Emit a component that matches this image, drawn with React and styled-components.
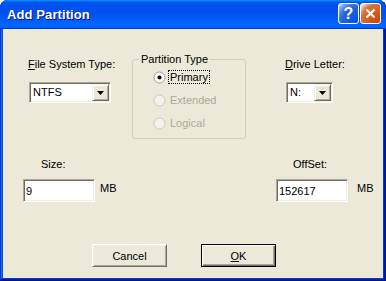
import React from 'react'
import styled, { createGlobalStyle } from 'styled-components'

const GlobalStyle = createGlobalStyle`
  body {
    margin: 0;
    background: #ffffff;
  }
`

const Window = styled.div`
  width: 386px;
  height: 281px;
  box-sizing: border-box;
  display: flex;
  flex-direction: column;
  border-radius: 8px 8px 0 0;
  overflow: hidden;
  background: #0055e5;
  box-shadow: inset -1px -1px #00138c, inset 1px 1px #0831d9,
    inset -2px -2px #001ea0, inset 2px 2px #166aee, inset -3px -3px #003bda,
    inset 3px 3px #0855dd;
`

const TitleBar = styled.div`
  height: 29px;
  flex: none;
  display: flex;
  align-items: center;
  padding: 0 5px 0 7px;
  border-radius: 8px 8px 0 0;
  background: linear-gradient(
    180deg,
    #0997ff,
    #0053ee 8%,
    #0050ee 40%,
    #06f 88%,
    #06f 93%,
    #005bff 95%,
    #003dd7 96%,
    #003dd7
  );
`

const Title = styled.div`
  flex: 1;
  color: #fff;
  font-family: 'Liberation Sans', Arial, sans-serif;
  font-weight: 700;
  font-size: 13px;
  letter-spacing: 0.1px;
  padding-bottom: 1px;
  text-shadow: 1px 1px #0f1089;
`

const CaptionButtons = styled.div`
  display: flex;
  gap: 1px;
  padding-bottom: 2px;
`

const CaptionButton = styled.div`
  width: 21px;
  height: 21px;
  box-sizing: border-box;
  border: 1px solid #fff;
  border-radius: 3px;
  display: flex;
  align-items: center;
  justify-content: center;
  color: #fff;
  font-family: 'Liberation Sans', Arial, sans-serif;
  font-weight: 700;
  font-size: 16px;
  background: ${(p) =>
    p.$close
      ? 'radial-gradient(circle at 90% 90%, #cc4600 0%, #dc6527 55%, #cd7546 70%, #ffccb2 90%, #fff 100%)'
      : 'radial-gradient(circle at 90% 90%, #0054e9 0%, #2263d5 55%, #4479e4 70%, #a3bbec 90%, #fff 100%)'};
`

const Client = styled.div`
  flex: 1;
  margin: 0 3px 3px;
  background: #ece9d8;
  font-family: 'Liberation Sans', Tahoma, sans-serif;
  font-size: 11px;
  color: #000;
  display: flex;
  flex-direction: column;
`

const TopRow = styled.div`
  display: grid;
  grid-template-columns: 104px 153px 1fr;
  align-items: start;
  padding: 24px 0 0 25px;
`

const Field = styled.div`
  display: flex;
  flex-direction: column;
  align-items: flex-start;
  padding-top: 5px;
`

const Label = styled.div`
  line-height: 13px;
  height: 13px;
  margin-left: ${(p) => p.$indent || 0}px;
  margin-bottom: ${(p) => p.$below || 0}px;
  white-space: nowrap;
`

const Combo = styled.div`
  width: ${(p) => p.$width}px;
  height: 21px;
  margin-left: 1px;
  box-sizing: border-box;
  display: flex;
  align-items: center;
  background: #fff;
  border: 1px solid;
  border-color: #aca899 #fff #fff #aca899;
  box-shadow: inset 1px 1px #716f64, inset -1px -1px #f1efe2;
  padding: 1px;
`

const ComboText = styled.div`
  flex: 1;
  padding-left: 2px;
  line-height: 13px;
`

const ArrowButton = styled.div`
  width: 17px;
  height: 17px;
  box-sizing: border-box;
  background: #ece9d8;
  border: 1px solid;
  border-color: #f1efe2 #716f64 #716f64 #f1efe2;
  box-shadow: inset 1px 1px #fff, inset -1px -1px #aca899;
  display: flex;
  align-items: center;
  justify-content: center;
`

const Group = styled.fieldset`
  margin: 0;
  padding: 0 0 0 20px;
  min-width: 0;
  width: 114px;
  height: 86px;
  box-sizing: border-box;
  border: 1px solid #d0d0bf;
  border-radius: 3px;
  display: flex;
  flex-direction: column;
  gap: 1px;
`

const Legend = styled.legend`
  margin-left: -14px;
  padding: 0 2px;
  line-height: 13px;
`

const RadioRow = styled.div`
  height: 22px;
  display: flex;
  align-items: center;
  color: ${(p) => (p.$disabled ? '#aca899' : '#000')};
`

const RadioText = styled.span`
  margin-left: 2px;
  padding: 0 1px;
  line-height: 12px;
  border: 1px dotted ${(p) => (p.$focus ? '#000' : 'transparent')};
`

const MidRow = styled.div`
  display: grid;
  grid-template-columns: 253px 1fr;
  padding: 19px 0 0 20px;
`

const SizeField = styled.div`
  display: flex;
  flex-direction: column;
  align-items: flex-start;
`

const InputLine = styled.div`
  display: flex;
  align-items: flex-start;
`

const TextBox = styled.input`
  width: 72px;
  height: 23px;
  box-sizing: border-box;
  margin: 0;
  padding: 0 0 0 2px;
  font-family: inherit;
  font-size: 11px;
  color: #000;
  background: #fff;
  outline: none;
  border: 1px solid;
  border-color: #aca899 #fff #fff #aca899;
  box-shadow: inset 1px 1px #716f64, inset -1px -1px #f1efe2;
`

const Unit = styled.span`
  margin: 3px 0 0 ${(p) => p.$gap}px;
  line-height: 13px;
`

const ButtonRow = styled.div`
  display: flex;
  gap: 34px;
  padding: 42px 0 0 89px;
`

const PushButton = styled.div`
  width: 75px;
  height: 23px;
  box-sizing: border-box;
  display: flex;
  align-items: center;
  justify-content: center;
  background: #ece9d8;
  border: 1px solid;
  border-color: ${(p) =>
    p.$default ? '#000' : '#fff #716f64 #716f64 #fff'};
  box-shadow: ${(p) =>
    p.$default
      ? 'inset 1px 1px #fff, inset -1px -1px #716f64, inset -2px -2px #aca899'
      : 'inset 1px 1px #f1efe2, inset -1px -1px #aca899'};
`

const Arrow = () => (
  <svg width="7" height="4" viewBox="0 0 7 4">
    <path d="M0 0h7L3.5 4z" fill="#000" />
  </svg>
)

const Radio = ({ checked, disabled }) => (
  <svg width="13" height="13" viewBox="0 0 13 13">
    <circle
      cx="6.5"
      cy="6.5"
      r="5.5"
      fill={disabled ? '#f4f3ee' : '#fff'}
      stroke={disabled ? '#cac8bb' : '#9b9a92'}
    />
    {checked && <circle cx="6.5" cy="6.5" r="2" fill="#000" />}
  </svg>
)

const CloseGlyph = () => (
  <svg width="11" height="11" viewBox="0 0 11 11">
    <path d="M1.5 1.5l8 8M9.5 1.5l-8 8" stroke="#fff" strokeWidth="2.2" />
  </svg>
)

const App = () => {
  return (
    <>
      <GlobalStyle />
      <Window>
        <TitleBar>
          <Title>Add Partition</Title>
          <CaptionButtons>
            <CaptionButton>?</CaptionButton>
            <CaptionButton $close>
              <CloseGlyph />
            </CaptionButton>
          </CaptionButtons>
        </TitleBar>
        <Client>
          <TopRow>
            <Field>
              <Label $below={11}>
                <u>F</u>ile System Type:
              </Label>
              <Combo $width={82}>
                <ComboText>NTFS</ComboText>
                <ArrowButton>
                  <Arrow />
                </ArrowButton>
              </Combo>
            </Field>
            <Group>
              <Legend>Partition Type</Legend>
              <RadioRow>
                <Radio checked />
                <RadioText $focus>Primary</RadioText>
              </RadioRow>
              <RadioRow $disabled>
                <Radio disabled />
                <RadioText>Extended</RadioText>
              </RadioRow>
              <RadioRow $disabled>
                <Radio disabled />
                <RadioText>Logical</RadioText>
              </RadioRow>
            </Group>
            <Field>
              <Label $below={11}>
                <u>D</u>rive Letter:
              </Label>
              <Combo $width={47}>
                <ComboText>N:</ComboText>
                <ArrowButton>
                  <Arrow />
                </ArrowButton>
              </Combo>
            </Field>
          </TopRow>
          <MidRow>
            <SizeField>
              <Label $indent={18} $below={8}>
                Size:
              </Label>
              <InputLine>
                <TextBox value="9" readOnly />
                <Unit $gap={5}>MB</Unit>
              </InputLine>
            </SizeField>
            <SizeField>
              <Label $indent={17} $below={8}>
                OffSet:
              </Label>
              <InputLine>
                <TextBox value="152617" readOnly />
                <Unit $gap={9}>MB</Unit>
              </InputLine>
            </SizeField>
          </MidRow>
          <ButtonRow>
            <PushButton>Cancel</PushButton>
            <PushButton $default>
              <span>
                <u>O</u>K
              </span>
            </PushButton>
          </ButtonRow>
        </Client>
      </Window>
    </>
  )
}

export default App
